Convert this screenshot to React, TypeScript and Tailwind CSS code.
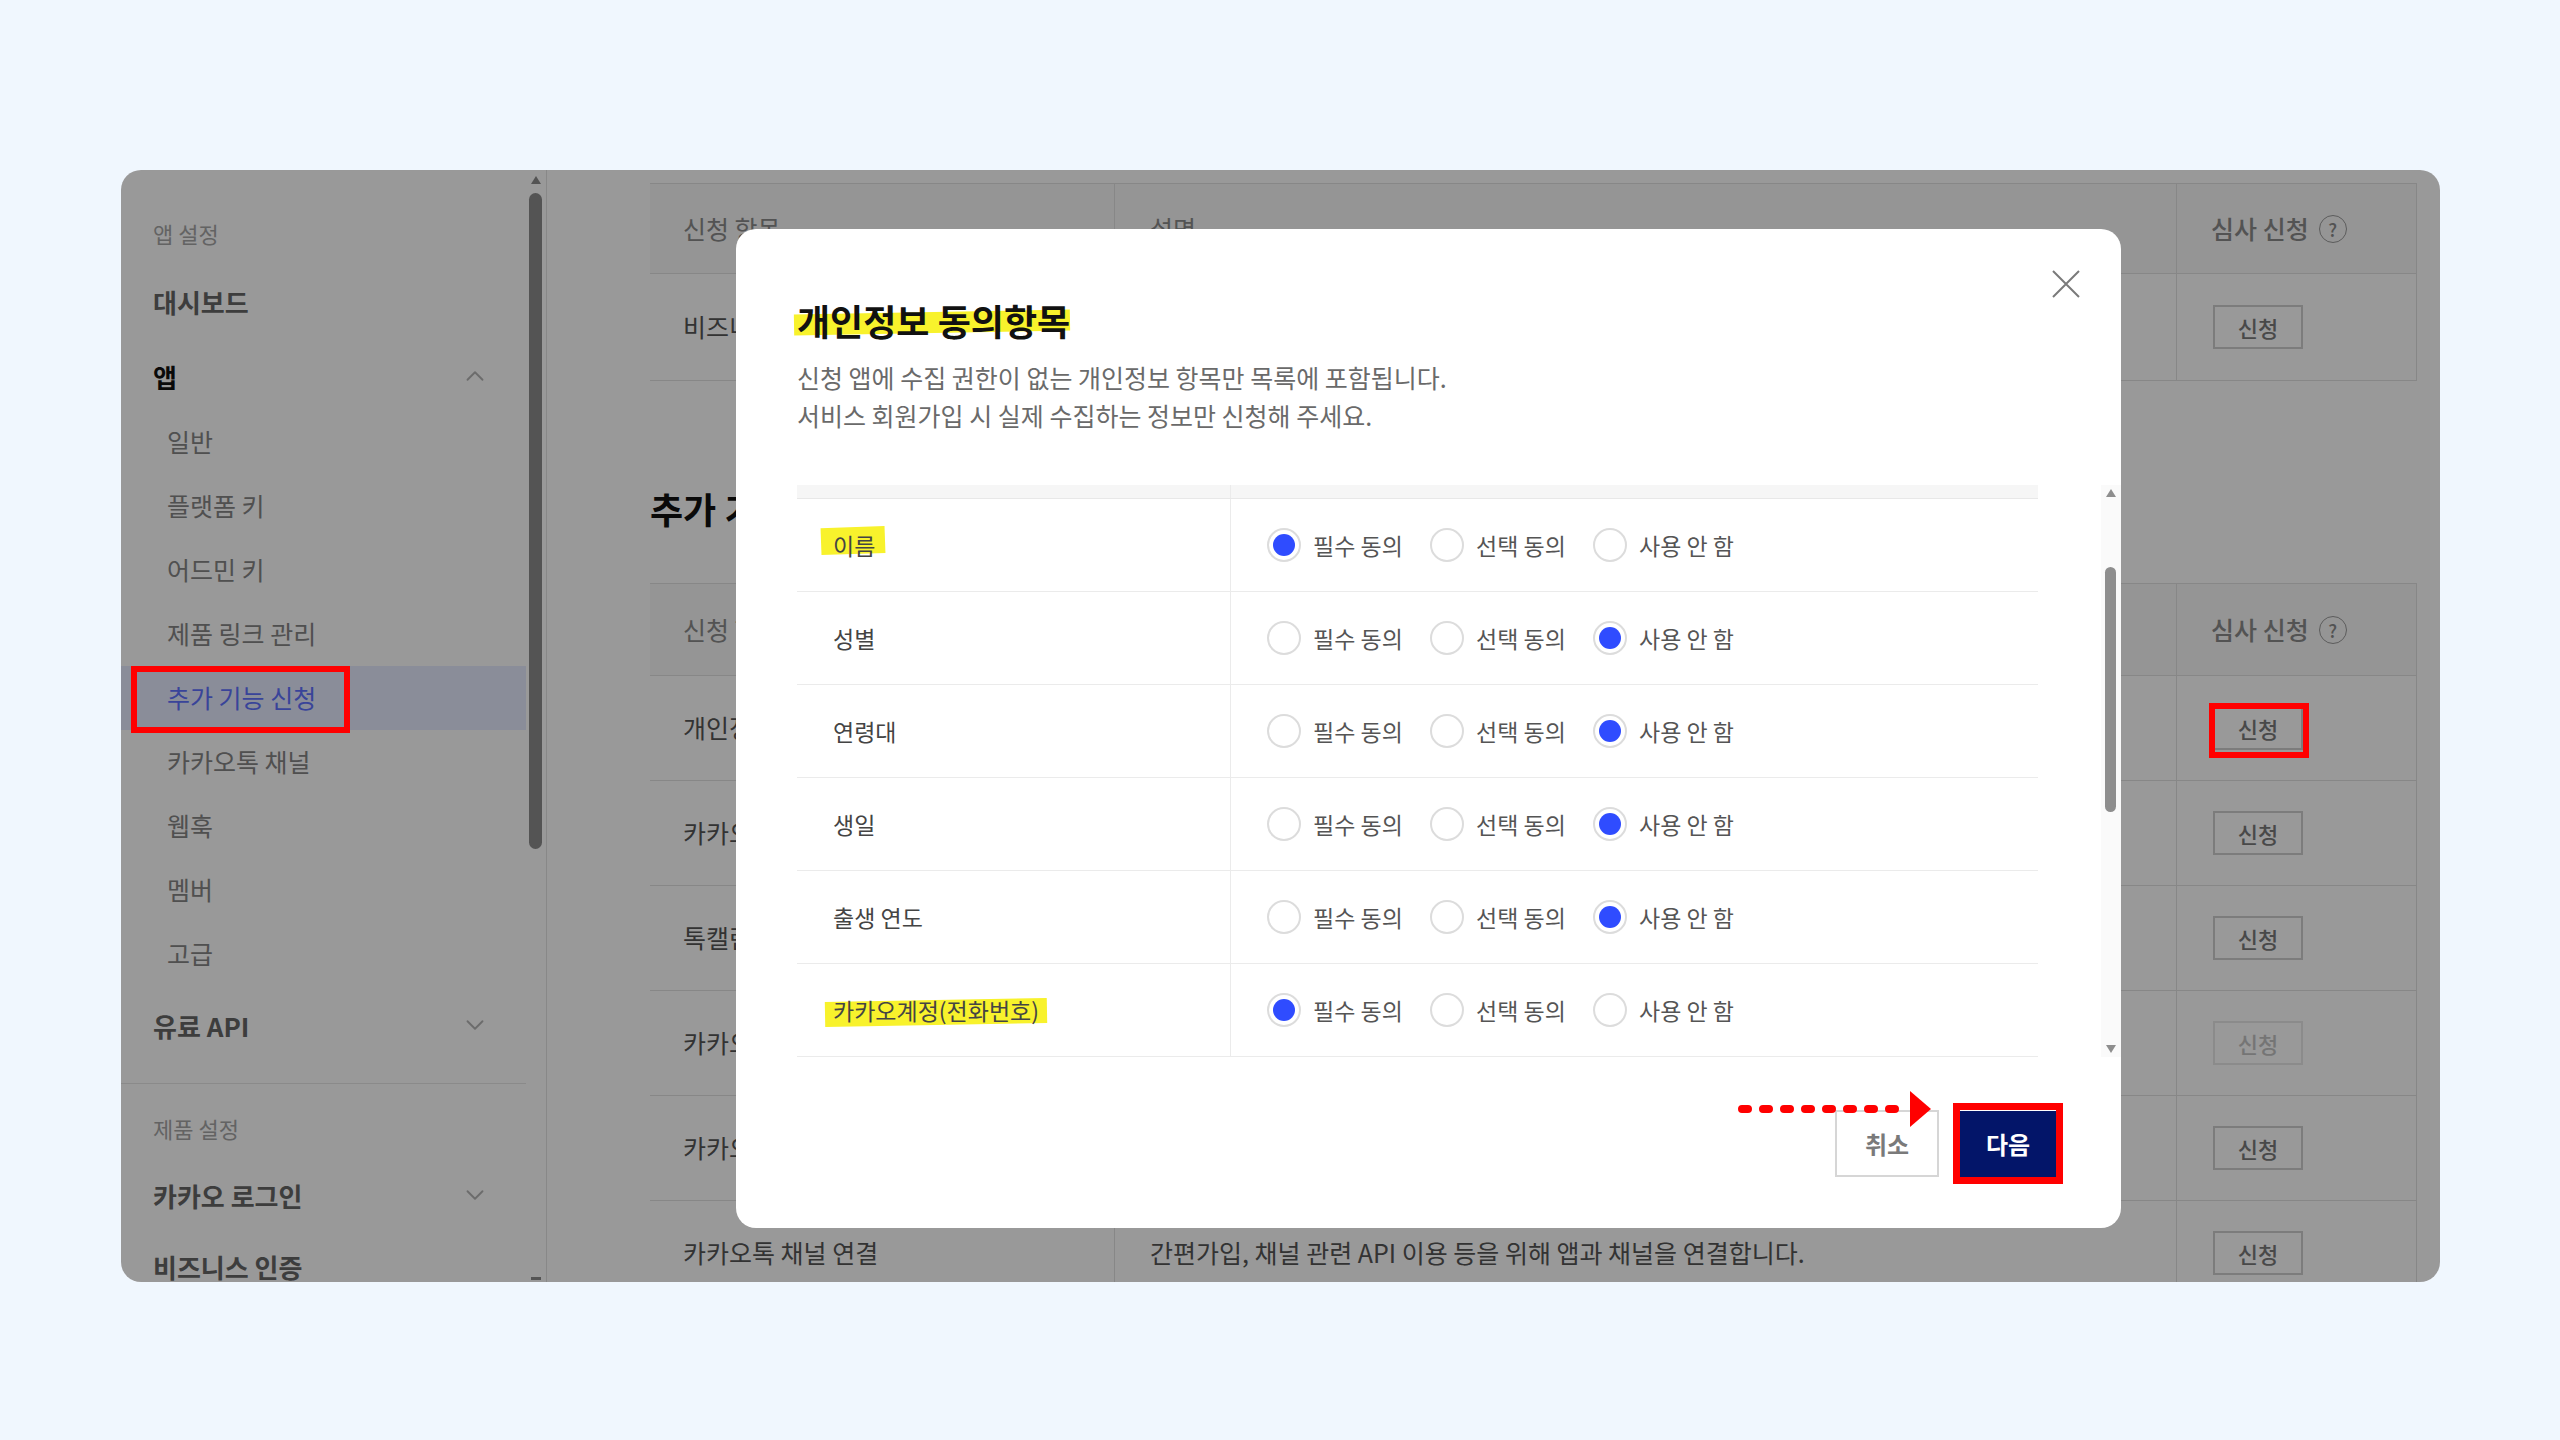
import { useState } from 'react'
import { ChevronUp, ChevronDown } from 'lucide-react'

const subItems = ['일반', '플랫폼 키', '어드민 키', '제품 링크 관리', '추가 기능 신청', '카카오톡 채널', '웹훅', '멤버', '고급']

// rows behind the modal: only the start of the name shows, so the description is left out
const features = [
  { name: '개인정보', desc: '', marked: true },
  { name: '카카오톡', desc: '' },
  { name: '톡캘린더', desc: '' },
  { name: '카카오페이', desc: '', disabled: true },
  { name: '카카오싱크', desc: '' },
  { name: '카카오톡 채널 연결', desc: '간편가입, 채널 관련 API 이용 등을 위해 앱과 채널을 연결합니다.' },
]

const consentRows = [
  { label: '이름', mark: 'name' },
  { label: '성별' },
  { label: '연령대' },
  { label: '생일' },
  { label: '출생 연도' },
  { label: '카카오계정(전화번호)', mark: 'phone' },
]

const options = ['필수 동의', '선택 동의', '사용 안 함']

function HelpIcon() {
  return (
    <span className="flex h-[28px] w-[28px] items-center justify-center rounded-full border-[1.5px] border-[#9a9a9a] text-[18px] font-medium leading-none text-[#8a8a8a]">
      ?
    </span>
  )
}

function ApplyButton({ disabled = false, marked = false }: { disabled?: boolean; marked?: boolean }) {
  return (
    <span className="relative inline-flex">
      <button
        className={`h-[44px] w-[90px] border-2 bg-white text-[22px] font-medium ${
          disabled ? 'border-[#e8e8e8] text-[#c4c4c4]' : 'border-[#cfcfcf] text-[#7a7a7a]'
        }`}
      >
        신청
      </button>
      {marked && (
        <span className="pointer-events-none absolute -left-[4px] -top-[3px] z-20 h-[55px] w-[100px] border-[6px] border-[#ff0000]" />
      )}
    </span>
  )
}

function Sidebar() {
  return (
    <aside className="flex w-[426px] shrink-0 border-r border-[#e3e3e3]">
      <div className="w-[406px] pt-[48px]">
        <p className="h-[30px] pl-[32px] text-[22px] leading-[30px] text-[#a6a6a6]">앱 설정</p>
        <p className="mt-[32px] h-[44px] pl-[32px] text-[26px] font-bold leading-[44px] text-[#666]">대시보드</p>
        <div className="mt-[30px] flex h-[44px] items-center justify-between pl-[32px] pr-[36px]">
          <span className="text-[26px] font-bold text-[#111]">앱</span>
          <ChevronUp className="h-[30px] w-[30px] text-[#b5b5b5]" strokeWidth={1.5} />
        </div>
        <ul className="mt-[12px]">
          {subItems.map((item) => {
            const active = item === '추가 기능 신청'
            return (
              <li
                key={item}
                className={`relative flex h-[64px] items-center pl-[46px] text-[25px] ${
                  active ? 'bg-[#e6ecff] text-[#5f72ff]' : 'text-[#858585]'
                }`}
              >
                {item}
                {active && (
                  <span className="pointer-events-none absolute left-[10px] top-0 z-20 h-[67px] w-[219px] border-[6px] border-[#ff0000]" />
                )}
              </li>
            )
          })}
        </ul>
        <div className="mt-[17px] flex h-[44px] items-center justify-between pl-[32px] pr-[36px]">
          <span className="text-[26px] font-bold text-[#666]">유료 API</span>
          <ChevronDown className="h-[30px] w-[30px] text-[#b5b5b5]" strokeWidth={1.5} />
        </div>
        <div className="mt-[36px] border-t border-[#e6e6e6]" />
        <p className="mt-[29px] h-[30px] pl-[32px] text-[22px] leading-[30px] text-[#a6a6a6]">제품 설정</p>
        <div className="mt-[30px] flex h-[44px] items-center justify-between pl-[32px] pr-[36px]">
          <span className="text-[26px] font-bold text-[#666]">카카오 로그인</span>
          <ChevronDown className="h-[30px] w-[30px] text-[#b5b5b5]" strokeWidth={1.5} />
        </div>
        <p className="mt-[28px] h-[44px] pl-[32px] text-[26px] font-bold leading-[44px] text-[#666]">비즈니스 인증</p>
      </div>
      {/* scrollbar */}
      <div className="relative w-[20px]">
        <span className="absolute left-[5px] top-[6px] h-0 w-0 border-x-[5px] border-b-[8px] border-x-transparent border-b-[#8c8c8c]" />
        <span className="absolute left-[3px] top-[23px] h-[656px] w-[13px] rounded-full bg-[#8c8c8c]" />
        <span className="absolute bottom-[2px] left-[5px] h-[3px] w-[10px] bg-[#8c8c8c]" />
      </div>
    </aside>
  )
}

function Main() {
  return (
    <main className="min-w-0 flex-1 pl-[103px] pr-[23px] pt-[13px] text-[#555]">
      <div className="border-r border-[#e2e2e2]">
        <div className="grid h-[91px] grid-cols-[465px_1062px_240px] border-y border-[#e2e2e2] bg-[#f8f8f8] text-[25px] text-[#8a8a8a]">
          <div className="flex items-center border-r border-[#e2e2e2] pl-[33px]">신청 항목</div>
          <div className="flex items-center border-r border-[#e2e2e2] pl-[35px]">설명</div>
          <div className="flex items-center gap-[10px] pl-[34px] font-medium">
            심사 신청 <HelpIcon />
          </div>
        </div>
        <div className="grid h-[107px] grid-cols-[465px_1062px_240px] border-b border-[#e2e2e2] text-[25px]">
          <div className="flex items-center border-r border-[#e2e2e2] pl-[33px]">비즈니스</div>
          <div className="border-r border-[#e2e2e2]" />
          <div className="flex items-center pl-[36px]">
            <ApplyButton />
          </div>
        </div>
      </div>

      <h3 className="mt-[105px] h-[44px] text-[36px] font-bold leading-[44px] text-[#111]">추가 기능</h3>

      <div className="mt-[53px] border-r border-[#e2e2e2]">
        <div className="grid h-[93px] grid-cols-[465px_1062px_240px] border-y border-[#e2e2e2] bg-[#f8f8f8] text-[25px] text-[#8a8a8a]">
          <div className="flex items-center border-r border-[#e2e2e2] pl-[33px]">신청 항목</div>
          <div className="flex items-center border-r border-[#e2e2e2] pl-[35px]">설명</div>
          <div className="flex items-center gap-[10px] pl-[34px] font-medium">
            심사 신청 <HelpIcon />
          </div>
        </div>
        {features.map((f) => (
          <div key={f.name} className="grid h-[105px] grid-cols-[465px_1062px_240px] border-b border-[#e2e2e2] text-[25px]">
            <div className="flex items-center border-r border-[#e2e2e2] pl-[33px]">{f.name}</div>
            <div className="flex items-center border-r border-[#e2e2e2] pl-[35px]">{f.desc}</div>
            <div className="flex items-center pl-[36px]">
              <ApplyButton disabled={f.disabled} marked={f.marked} />
            </div>
          </div>
        ))}
      </div>
    </main>
  )
}

function Radio({ checked }: { checked: boolean }) {
  return (
    <span className="flex h-[34px] w-[34px] shrink-0 items-center justify-center rounded-full border-2 border-[#dcdcdc] bg-white">
      {checked && <span className="h-[22px] w-[22px] rounded-full bg-[#2f4cff]" />}
    </span>
  )
}

function Modal() {
  const [choices, setChoices] = useState<number[]>([0, 2, 2, 2, 2, 0])

  return (
    <div className="absolute left-[615px] top-[59px] z-30 h-[999px] w-[1385px] rounded-[20px] bg-white">
      <button className="absolute right-[41px] top-[41px] h-[28px] w-[28px]">
        <svg viewBox="0 0 28 28" className="h-[28px] w-[28px]" fill="none" stroke="#7a7a7a" strokeWidth="2">
          <path d="M1 1L27 27M27 1L1 27" />
        </svg>
      </button>

      <div className="pl-[61px] pt-[69px]">
        <h2 className="h-[44px] text-[36px] font-bold leading-[44px] text-[#111]">
          <span className="relative inline-block">
            <span className="absolute -left-[3px] right-0 top-[14px] h-[21px] -rotate-1 bg-[#f8f22c]" />
            <span className="relative">개인정보 동의항목</span>
          </span>
        </h2>
        <p className="mt-[16px] text-[25px] leading-[38px] text-[#6a6a6a]">
          신청 앱에 수집 권한이 없는 개인정보 항목만 목록에 포함됩니다.
          <br />
          서비스 회원가입 시 실제 수집하는 정보만 신청해 주세요.
        </p>
      </div>

      <div className="mt-[51px] flex">
        <div className="ml-[61px] w-[1241px]">
          <div className="grid h-[14px] grid-cols-[434px_1fr] border-b border-[#e8e8e8] bg-[#f6f6f6]">
            <div className="border-r border-[#ebebeb]" />
            <div />
          </div>
          {consentRows.map((row, i) => (
            <div key={row.label} className="grid h-[93px] grid-cols-[434px_1fr] border-b border-[#ebebeb]">
              <div className="flex items-center border-r border-[#ebebeb] pl-[36px] text-[23px] text-[#444]">
                {row.mark ? (
                  <span className="relative inline-block">
                    <span
                      className={`absolute bg-[#f8f22c] ${
                        row.mark === 'name'
                          ? '-left-[12px] -right-[10px] -top-[1px] h-[27px] -rotate-2'
                          : '-left-[8px] -right-[8px] top-[7px] h-[25px] -rotate-1'
                      }`}
                    />
                    <span className="relative">{row.label}</span>
                  </span>
                ) : (
                  row.label
                )}
              </div>
              <div className="flex items-center pl-[36px]">
                {options.map((opt, j) => (
                  <label
                    key={opt}
                    className="flex w-[163px] cursor-pointer items-center gap-[12px] text-[23px] text-[#555]"
                    onClick={() => setChoices((prev) => prev.map((v, k) => (k === i ? j : v)))}
                  >
                    <Radio checked={choices[i] === j} />
                    {opt}
                  </label>
                ))}
              </div>
            </div>
          ))}
        </div>
        {/* scrollbar */}
        <div className="relative ml-auto h-[572px] w-[20px] bg-[#fafafa]">
          <span className="absolute left-[5px] top-[4px] h-0 w-0 border-x-[5px] border-b-[8px] border-x-transparent border-b-[#8e8e8e]" />
          <span className="absolute left-[4px] top-[82px] h-[245px] w-[11px] rounded-full bg-[#8e8e8e]" />
          <span className="absolute bottom-[4px] left-[5px] h-0 w-0 border-x-[5px] border-t-[8px] border-x-transparent border-t-[#8e8e8e]" />
        </div>
      </div>

      <div className="mt-[53px] flex items-center justify-end gap-[21px] pr-[65px]">
        <button className="h-[67px] w-[104px] border-2 border-[#d6d6d6] bg-white text-[24px] font-bold text-[#7a7a7a]">
          취소
        </button>
        <span className="relative inline-flex">
          <button className="h-[67px] w-[96px] border-t border-white bg-[#031569] text-[24px] font-bold text-white">
            다음
          </button>
          <span className="pointer-events-none absolute -bottom-[7px] -left-[7px] -right-[7px] -top-[7px] border-[7px] border-[#ff0000]" />
        </span>
      </div>

      <svg className="pointer-events-none absolute left-[998px] top-[860px]" width="200" height="40" viewBox="0 0 200 40">
        <line x1="8" y1="20" x2="176" y2="20" stroke="#ff0000" strokeWidth="8" strokeLinecap="round" strokeDasharray="6 15" />
        <polygon points="176,2 197,20 176,38" fill="#ff0000" />
      </svg>
    </div>
  )
}

export default function App() {
  return (
    <div className="min-h-screen bg-[#f0f7fe] pl-[121px] pt-[170px] font-['Noto_Sans_CJK_KR','Noto_Sans',sans-serif]">
      <div className="relative flex h-[1112px] w-[2319px] overflow-hidden rounded-[20px] bg-white">
        <Sidebar />
        <Main />
        <div className="pointer-events-none absolute inset-0 z-10 bg-black/40" />
        <Modal />
      </div>
    </div>
  )
}
